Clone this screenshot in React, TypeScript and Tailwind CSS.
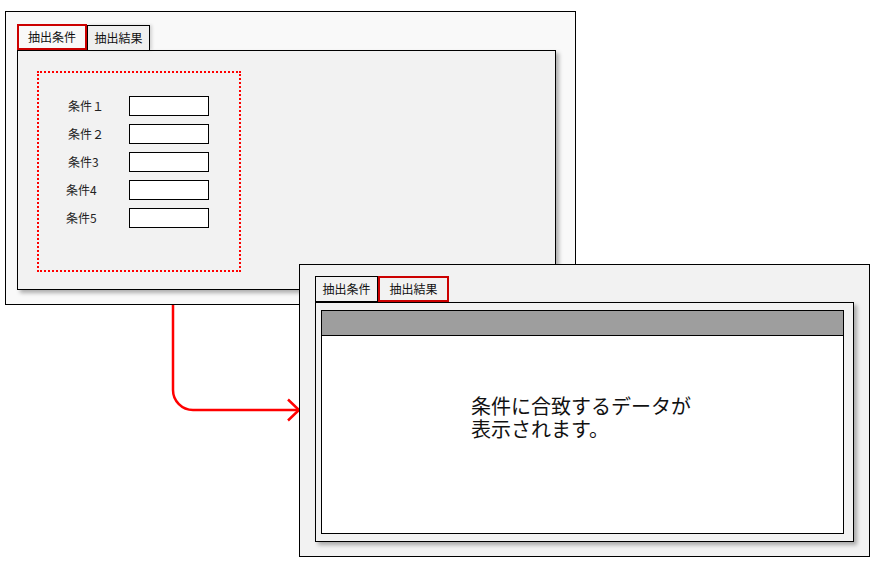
import React from "react";

const font = { fontFamily: '"Noto Sans CJK JP", "Noto Sans", sans-serif' };

function Row({ label, tight }: { label: string; tight?: boolean }) {
  return (
    <div className="flex items-center h-[20px]">
      <div className={`w-[63px] text-[12px] leading-none text-[#222] ${tight ? "pl-0" : "pl-[2px]"}`}>{label}</div>
      <div className="w-[80px] h-[20px] border border-black bg-white" />
    </div>
  );
}

export default function App() {
  return (
    <div className="relative w-[888px] h-[568px] bg-white overflow-hidden" style={font}>
      {/* Window 1 */}
      <div className="absolute left-[5px] top-[11px] w-[571px] h-[294px] border border-black bg-[#f9f9f9] pl-[11px] pt-[12px]">
        <div className="flex items-end h-[26px]">
          <div className="relative z-10 w-[70px] h-[26px] border-2 border-[#cc0000] bg-[#f9f9f9] flex items-center justify-center text-[12px] text-[#111]">
            抽出条件
          </div>
          <div className="w-[63px] h-[25px] border border-b-0 border-black bg-[#efefef] shadow-[2px_0_3px_rgba(0,0,0,0.15)] flex items-center justify-center text-[12px] text-[#111]">
            抽出結果
          </div>
        </div>
        <div className="w-[539px] h-[240px] border border-black bg-[#f2f2f2] shadow-[3px_3px_4px_rgba(0,0,0,0.3)] pl-[19px] pt-[20px]">
          <div className="w-[204px] h-[201px] border-2 border-dotted border-[#ff0000] pl-[27px] pt-[23px] flex flex-col gap-[8px]">
            <Row label="条件１" />
            <Row label="条件２" />
            <Row label="条件3" />
            <Row label="条件4" tight />
            <Row label="条件5" tight />
          </div>
        </div>
      </div>

      {/* Arrow */}
      <svg className="absolute left-0 top-0" width="888" height="568" viewBox="0 0 888 568" fill="none">
        <path d="M173 305 V390 A20 20 0 0 0 193 410 H299" stroke="#ff0000" strokeWidth="2.5" />
        <path d="M288 399.5 L299 410 L288 420.5" stroke="#ff0000" strokeWidth="2.5" />
      </svg>

      {/* Window 2 */}
      <div className="absolute left-[299px] top-[264px] w-[571px] h-[293px] border border-black bg-[#f2f2f2] pl-[15px] pt-[11px]">
        <div className="flex items-end h-[26px]">
          <div className="w-[63px] h-[26px] border border-black bg-[#f2f2f2] flex items-center justify-center text-[12px] text-[#111]">
            抽出条件
          </div>
          <div className="relative z-10 w-[71px] h-[26px] border-2 border-[#cc0000] bg-[#f2f2f2] flex items-center justify-center text-[12px] text-[#111]">
            抽出結果
          </div>
        </div>
        <div className="w-[539px] h-[240px] border border-black bg-[#f2f2f2] shadow-[3px_3px_4px_rgba(0,0,0,0.3)] pl-[5px] pt-[7px]">
          <div className="w-[523px] h-[224px] border border-black bg-white flex flex-col">
            <div className="h-[25px] bg-[#9e9e9e] border-b border-black" />
            <div className="pl-[149px] pt-[58px] text-[20px] leading-[23px] text-[#111]">
              <div>条件に合致するデータが</div>
              <div>表示されます。</div>
            </div>
          </div>
        </div>
      </div>
    </div>
  );
}
